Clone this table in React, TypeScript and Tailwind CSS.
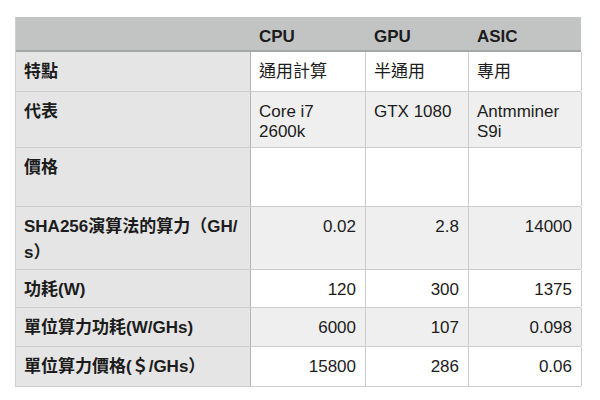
import React from "react";

type Row = {
  label: React.ReactNode;
  cells: React.ReactNode[];
  h: string;
  shade: boolean;
  right: boolean;
  labelLeading?: string;
};

const rows: Row[] = [
  { label: "特點", cells: ["通用計算", "半通用", "專用"], h: "h-[40px]", shade: false, right: false },
  {
    label: "代表",
    cells: [
      <>Core i7<br />2600k</>,
      "GTX 1080",
      <>Antmminer<br />S9i</>,
    ],
    h: "h-[56px]",
    shade: true,
    right: false,
  },
  { label: "價格", cells: ["", "", ""], h: "h-[59px]", shade: false, right: false },
  {
    label: <>SHA256演算法的算力（GH/<br />s）</>,
    cells: ["0.02", "2.8", "14000"],
    h: "h-[63px]",
    shade: true,
    right: true,
    labelLeading: "leading-[26px] pt-[7px]",
  },
  { label: "功耗(W)", cells: ["120", "300", "1375"], h: "h-[38px]", shade: false, right: true },
  { label: "單位算力功耗(W/GHs)", cells: ["6000", "107", "0.098"], h: "h-[39px]", shade: true, right: true },
  { label: "單位算力價格(＄/GHs）", cells: ["15800", "286", "0.06"], h: "h-[40px]", shade: false, right: true },
];

const widths = ["w-[115px]", "w-[103px]", "w-[113px]"];

export default function App() {
  return (
    <div
      className="w-[600px] h-[400px] bg-white text-[17px] text-[#1c1c1c] pt-[17px] pl-[15px]"
      style={{ fontFamily: '"Liberation Sans", Arial, "Noto Sans CJK TC", sans-serif' }}
    >
      <div className="w-[566px] border-l border-[#cfcfcf]">
        <div className="flex h-[35px] bg-[#c2c4c4] border-b-2 border-[#a6a8a8] font-bold">
          <div className="w-[235px] shrink-0" />
          {["CPU", "GPU", "ASIC"].map((t, i) => (
            <div key={t} className={`${widths[i]} shrink-0 pl-[8px] pt-[10px] leading-[20px]`}>
              {t}
            </div>
          ))}
        </div>
        {rows.map((r, ri) => (
          <div key={ri} className={`flex ${r.h} border-b border-[#cccccc]`}>
            <div
              className={`w-[235px] shrink-0 bg-[#e5e5e5] border-r border-[#b3b3b3] pl-[8px] font-bold whitespace-nowrap ${
                r.labelLeading ?? "pt-[10px] leading-[20px]"
              }`}
            >
              {r.label}
            </div>
            {r.cells.map((c, ci) => (
              <div
                key={ci}
                className={`${widths[ci]} shrink-0 border-r border-[#cccccc] pt-[10px] leading-[20px] whitespace-nowrap ${
                  r.shade ? "bg-[#efefef]" : "bg-white"
                } ${r.right ? "text-right pr-[9px]" : "pl-[8px]"}`}
              >
                {c}
              </div>
            ))}
          </div>
        ))}
      </div>
    </div>
  );
}
